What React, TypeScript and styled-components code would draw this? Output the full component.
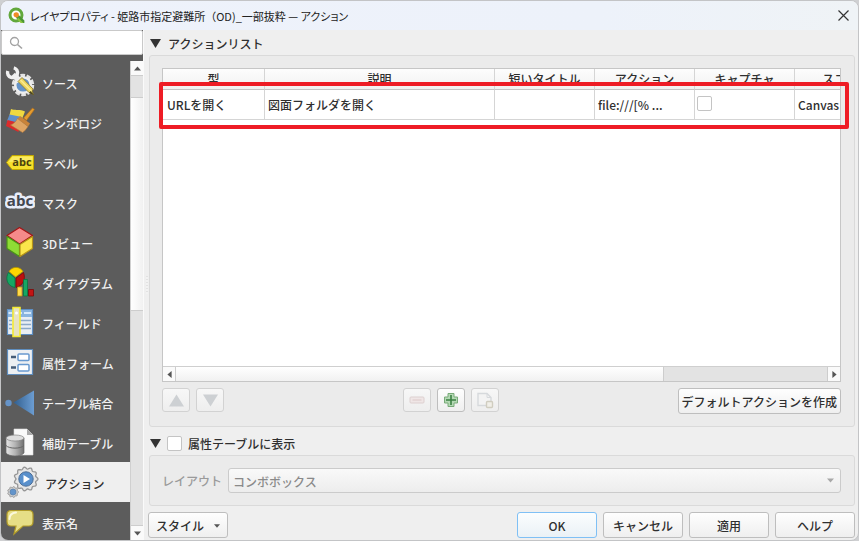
import React from "react";
import styled, { createGlobalStyle } from "styled-components";

const Global = createGlobalStyle`
  *, *::before, *::after { box-sizing: border-box; }
  body { margin: 0; background: #cfd0d2; }
  body, button, input, select, table {
    font-family: "Noto Sans CJK JP", "Noto Sans", sans-serif;
    font-size: 12px;
    font-weight: 500;
    color: #2f2f2f;
  }
  button { padding: 0; }
`;

const Window = styled.div`
  height: 100vh;
  display: flex;
  flex-direction: column;
  overflow: hidden;
  background: #efefef;
  border: 1px solid #c3c4c6;
  border-radius: 8px;
`;

const TitleBar = styled.header`
  flex: none;
  height: 29px;
  display: flex;
  align-items: center;
  gap: 5px;
  padding: 0 9px 0 7px;
  background: linear-gradient(90deg, #eef2fb, #edf2fa 70%, #eff3f6);
`;

const Title = styled.h1`
  flex: 1;
  margin: 0;
  font-size: 11px;
  font-weight: 400;
  font-feature-settings: "palt";
  white-space: nowrap;
  color: #222;
`;

const FullWidth = styled.span`
  font-feature-settings: normal;
`;

const CloseButton = styled.button`
  display: flex;
  border: 0;
  background: none;
`;

const Body = styled.div`
  flex: 1;
  min-height: 0;
  display: flex;
`;

const Sidebar = styled.aside`
  flex: none;
  width: 142px;
  display: flex;
  flex-direction: column;
  background: #5c5c5c;
`;

const SearchBox = styled.label`
  flex: none;
  display: flex;
  align-items: center;
  gap: 4px;
  height: 25px;
  padding: 0 7px;
  background: #fff;
  border: 1px solid #c9c9c9;
  border-radius: 2px;
`;

const SearchInput = styled.input`
  flex: 1;
  min-width: 0;
  border: 0;
  outline: 0;
  background: transparent;
`;

const ListArea = styled.div`
  flex: 1;
  min-height: 0;
  display: flex;
  padding-top: 6px;
`;

const PageList = styled.nav`
  flex: 1;
  padding-top: 1px;
  overflow: hidden;
`;

const PageItem = styled.button<{ $active?: boolean }>`
  display: flex;
  align-items: center;
  gap: ${(p) => (p.$active ? 6 : 7)}px;
  width: 100%;
  height: 40px;
  padding: 2px 0 0 ${(p) => (p.$active ? 6 : 4)}px;
  border: 0;
  background: ${(p) => (p.$active ? "#efefef" : "transparent")};
  color: ${(p) => (p.$active ? "#2f2f2f" : "#f0f0f0")};
  text-align: left;
  white-space: nowrap;
  svg { flex: none; margin-top: -3px; }
`;

const VScroll = styled.div`
  flex: none;
  width: 13px;
  display: flex;
  flex-direction: column;
  background: #e3e3e3;
  border-left: 1px solid #d0d0d0;
`;

const HScroll = styled.div`
  flex: none;
  height: 15px;
  display: flex;
  background: #e3e3e3;
  border-top: 1px solid #cfcfcf;
`;

const ScrollArrow = styled.button`
  flex: none;
  display: flex;
  align-items: center;
  justify-content: center;
  min-width: 12px;
  min-height: 14px;
  border: 0;
  background: #fafafa;
`;

const VTrack = styled.div`
  flex: 1;
  display: grid;
  grid-template-rows: 21fr 215fr 215fr;
  border: 0 solid #cdcdcd;
  border-width: 1px 0;
`;

const HTrack = styled.div`
  flex: 1;
  display: grid;
  grid-template-columns: 3fr 1fr;
  border: 0 solid #cdcdcd;
  border-width: 0 1px;
`;

const Thumb = styled.div<{ $vertical?: boolean }>`
  ${(p) => (p.$vertical ? "grid-row: 2;" : "")}
  background: linear-gradient(${(p) => (p.$vertical ? "90deg" : "180deg")}, #fff, #f1f1f1);
  border: 0 solid #cdcdcd;
  border-width: ${(p) => (p.$vertical ? "1px 0" : "0 1px 0 0")};
`;

const Splitter = styled.div`
  flex: none;
  width: 6px;
  display: flex;
  align-items: center;
  justify-content: center;
  border-left: 1px solid #fafafa;
  &::after {
    content: "";
    width: 2px;
    height: 18px;
    background: repeating-linear-gradient(#e2e2e2 0 1px, #f2f2f2 1px 3px);
  }
`;

const Main = styled.main`
  flex: 1;
  min-width: 0;
  display: flex;
  flex-direction: column;
  padding-right: 3px;
`;

const GroupTitle = styled.h2<{ $tall?: boolean }>`
  flex: none;
  display: flex;
  align-items: center;
  gap: ${(p) => (p.$tall ? 6 : 7)}px;
  height: ${(p) => (p.$tall ? 28 : 25)}px;
  padding: ${(p) => (p.$tall ? 4 : 2)}px 0 0 1px;
  margin: 0;
  font-size: 12px;
  font-weight: 500;
  label { display: flex; align-items: center; gap: 6px; }
`;

const Disclosure = styled.button`
  display: flex;
  border: 0;
  background: none;
`;

const Group = styled.section<{ $grow?: boolean }>`
  flex: ${(p) => (p.$grow ? "1" : "none")};
  min-height: 0;
  display: flex;
  flex-direction: column;
  padding: 12px 13px 12px 12px;
  background: #ebebeb;
  border: 1px solid #dadada;
  border-radius: 3px;
`;

const TableFrame = styled.div`
  position: relative;
  flex: 1;
  min-height: 0;
  display: flex;
  flex-direction: column;
  background: #fff;
  border: 1px solid #c6c6c6;
`;

const TableViewport = styled.div`
  flex: 1;
  min-height: 0;
  overflow: hidden;
`;

const ActionTable = styled.table`
  table-layout: fixed;
  width: 735px;
  border-collapse: separate;
  border-spacing: 0;
  th, td { padding: 0; border: 0 solid #d5d5d5; white-space: nowrap; overflow: hidden; line-height: 18px; }
  th {
    height: 21px;
    border-width: 0 1px 1px 0;
    border-bottom-color: #c4c4c4;
    background: linear-gradient(#fdfdfd, #f1f1f1);
    font-weight: 500;
    text-align: center;
  }
  td { height: 30px; padding: 1px 3px 0; border-width: 0 1px 1px 0; }
  td:first-child { padding-left: 4px; }
  td input { display: block; margin: -4px 0 0 -1px; }
`;

const Column = styled.col<{ $width: number }>`
  width: ${(p) => p.$width}px;
`;

const Highlight = styled.div`
  position: absolute;
  top: 13px;
  left: -4px;
  right: -9px;
  height: 47px;
  border: 4px solid #ee1c25;
  border-radius: 2px;
  pointer-events: none;
`;

const Check = styled.input`
  appearance: none;
  flex: none;
  width: 15px;
  height: 15px;
  margin: 0;
  background: #fff;
  border: 1px solid #c4c4c4;
  border-radius: 2px;
`;

const ToolRow = styled.div`
  flex: none;
  display: flex;
  justify-content: space-between;
  padding-top: 6px;
`;

const ToolGroup = styled.div`
  display: flex;
  gap: 6px;
`;

const Button = styled.button<{ $primary?: boolean; $width?: number }>`
  flex: none;
  display: flex;
  align-items: center;
  justify-content: center;
  gap: 10px;
  height: 26px;
  width: ${(p) => (p.$width ? `${p.$width}px` : "auto")};
  padding: 1px 3px 0;
  background: ${(p) => (p.$primary ? "linear-gradient(#fbfdfe, #eaf1f6)" : "linear-gradient(#fefefe, #efefef)")};
  border: 1px solid ${(p) => (p.$primary ? "#7fc0f5" : "#bebebe")};
  border-radius: 3px;
  white-space: nowrap;
  &:disabled { border-color: #d2d2d2; background: linear-gradient(#f7f7f7, #eee); }
`;

const ToolButton = styled(Button)`
  width: 28px;
  height: 24px;
  padding: 0;
`;

const LayoutRow = styled.div`
  display: flex;
  align-items: center;
  gap: 6px;
  label { color: #9a9a9a; }
`;

const ComboBox = styled.div`
  flex: 1;
  position: relative;
  svg { position: absolute; right: 7px; top: 9px; pointer-events: none; }
`;

const Combo = styled.select`
  appearance: none;
  display: block;
  width: 100%;
  height: 25px;
  padding: 1px 20px 0 4px;
  color: #8a8a8a;
  opacity: 1;
  background: linear-gradient(#f9f9f9, #ededed);
  border: 1px solid #cbcbcb;
  border-radius: 3px;
`;

const Footer = styled.footer`
  flex: none;
  display: flex;
  justify-content: space-between;
  padding: 6px 0 2px;
  margin-left: -1px;
`;

const DialogButtons = styled.div`
  display: flex;
  gap: 6px;
`;

const triangles = {
  up: "M0 9 5 1 10 9z",
  down: "M0 1 10 1 5 9z",
  left: "M8 0 2 5 8 10z",
  right: "M2 0 8 5 2 10z",
  smallUp: "M0 8 5 2 10 8z",
  smallDown: "M0 2 10 2 5 8z",
};

function Triangle({ dir, size = 7, color = "#555" }: { dir: keyof typeof triangles; size?: number; color?: string }) {
  return (
    <svg width={size} height={size} viewBox="0 0 10 10" aria-hidden="true">
      <path d={triangles[dir]} fill={color} />
    </svg>
  );
}

function Icon({ children }: { children: React.ReactNode }) {
  return (
    <svg width="30" height="32" viewBox="0 0 30 32" aria-hidden="true">
      {children}
    </svg>
  );
}

const QgisLogo = () => (
  <svg width="17" height="17" viewBox="0 0 17 17" aria-hidden="true">
    <circle cx="8" cy="8" r="6" fill="#fff" stroke="#62a83c" strokeWidth="3" />
    <path d="M8.2 8.2H11l5.400 5.400V16h-3L8.2 11z" fill="#4c9635" />
    <path d="M10 10.600 15.400 16h-2.600l-3.600-3.600z" fill="#8dc63f" />
    <path d="M5.500 8a2.700 2.700 0 1 1 5.400 0c0 1.500-1 2.500-2.400 2.500S5.500 9.500 5.500 8z" fill="#f08c28" />
  </svg>
);

const SourceIcon = () => (
  <Icon>
    <circle cx="18" cy="19" r="9.500" fill="none" stroke="#e4e4e4" strokeWidth="3.500" strokeDasharray="4.500 1.500" />
    <circle cx="18" cy="19" r="7.800" fill="#6594c9" stroke="#eee" strokeWidth="2.500" />
    <path d="m8 8.500 6.500 7" stroke="#eee" strokeWidth="5" />
    <path d="M2.800 5a5 5 0 1 0 6-3.200" fill="none" stroke="#f0f0f0" strokeWidth="3.400" />
    <path d="m13 15.500 4-4 11 11.500-1 2 1.500 3.500-4.500-2z" fill="#ecd55f" stroke="#8b7728" strokeWidth=".8" />
    <path d="m15.500 14 11 11" stroke="#fbeb90" strokeWidth="1.500" />
    <path d="m25.500 25 3.500 4-5-2z" fill="#44401f" />
  </Icon>
);

const BrushIcon = () => (
  <Icon>
    <path d="M6 3c5 2 9-.5 14 2.500L17 13 4.500 9z" fill="#efd840" />
    <path d="M4.500 8.500 17 11l-2 7-13-3z" fill="#5f8fca" />
    <path d="m2.500 14 12 3-1 9-12.500-6z" fill="#dd2b2b" />
    <path d="m27.500 2 2 1.500-8 11-3-2.500z" fill="#e49b2f" stroke="#a86a1c" strokeWidth=".7" />
    <path d="m15 10 10 7.500-2 3L12.500 13z" fill="#c98339" />
    <path d="M12.500 12.500 23 20.500c-1.500 2-3.500 5-5.500 6L5.500 19c3-1 5.500-3.500 7-6.500z" fill="#dfa564" stroke="#b3783b" strokeWidth=".6" />
  </Icon>
);

const LabelIcon = () => (
  <Icon>
    <path d="M1.500 16.500 7 9.500h21.500v14H7z" fill="#f5df2c" stroke="#c2a800" strokeWidth="1" />
    <path d="m3.500 16 4-5.500h20v4z" fill="#fbf07a" opacity=".7" />
    <text x="17" y="20" textAnchor="middle" fontFamily="Open Sans, sans-serif" fontSize="11" fontWeight="700" fill="#4b4310">abc</text>
  </Icon>
);

const MaskIcon = () => (
  <Icon>
    <text x="15" y="20" textAnchor="middle" fontFamily="Open Sans, sans-serif" fontSize="15" fontWeight="700" fill="#43474f" stroke="#e9edf9" strokeWidth="5" strokeLinejoin="round" paintOrder="stroke">abc</text>
  </Icon>
);

const CubeIcon = () => (
  <Icon>
    <g strokeWidth="1.200" strokeLinejoin="round">
      <path d="M14.500 1.500 27.500 9.500 14.500 18 2 9.500z" fill="#f48a8a" stroke="#a31515" />
      <path d="M2 10.500 14.500 18.500v12L2 22.500z" fill="#8fdc35" stroke="#4a9418" />
      <path d="M27.500 10.500 15 18.500v12l12.500-8z" fill="#fbe64b" stroke="#b69418" />
    </g>
  </Icon>
);

const DiagramIcon = () => (
  <Icon>
    <g strokeWidth=".8">
      <path d="M10.500 11 4 5.500c3-5.500 11-5.500 14 0z" fill="#ffd500" stroke="#b49600" />
      <path d="M10 12v9.500C1 20 .5 11 3.500 6.500z" fill="#16a763" stroke="#087640" />
      <path d="m11 12 7.500-5.500c2.500 7-.5 13-7.500 15z" fill="#bd1010" stroke="#780909" />
      <path d="M12.500 21h4.500v9h-4.500z" fill="#ffd94a" stroke="#b79319" />
      <path d="M18.500 13.500h4v16.500h-4z" fill="#16a763" stroke="#087640" />
      <path d="M23.500 23.500h5v6.500h-5z" fill="#c31414" stroke="#780909" />
    </g>
  </Icon>
);

const FieldsIcon = () => (
  <Icon>
    <path d="M2.500 3.500h25v25h-25z" fill="#e9eef4" stroke="#5d8fc4" strokeWidth="1.200" />
    <path d="M3 4h24v7H3z" fill="#8ab5e0" />
    <path d="M13.500 7H17M19 7h7M3.500 7H7" stroke="#d6e9fb" strokeWidth="2" />
    <path d="M4 14.500h3M4 18.500h3M4 22.500h3M15 14.500h11M15 18.500h11M15 22.500h11" stroke="#8ca9c8" strokeWidth="1.500" />
    <path d="M8 1.500h7v29H8z" fill="#e7e3c1" stroke="#f4ea34" strokeWidth="1.600" />
    <circle cx="11.500" cy="7" r="1.500" fill="#fff" />
  </Icon>
);

const FormIcon = () => (
  <Icon>
    <path d="M2.500 3.500h25v25h-25z" fill="#eceff2" stroke="#5f8ebf" strokeWidth="1.200" />
    <path d="M6 11h5M6 21.500h5" stroke="#445c78" strokeWidth="2.400" />
    <rect x="13" y="8" width="11" height="6.500" rx="1" fill="#fff" stroke="#6899cf" strokeWidth="1.500" />
    <rect x="13" y="18.500" width="11" height="6.500" rx="1" fill="#fff" stroke="#6899cf" strokeWidth="1.500" />
  </Icon>
);

const JoinIcon = () => (
  <Icon>
    <defs>
      <linearGradient id="join" x1="0" x2="1">
        <stop offset="0" stopColor="#315f8f" />
        <stop offset="1" stopColor="#6c9dd2" />
      </linearGradient>
    </defs>
    <circle cx="3.500" cy="17" r="3.200" fill="#6694c9" />
    <path d="M8.500 16.500 29 4.500v25z" fill="url(#join)" />
  </Icon>
);

const StorageIcon = () => (
  <Icon>
    <defs>
      <linearGradient id="drum" x1="0" x2="1">
        <stop offset="0" stopColor="#e6e6e6" />
        <stop offset=".5" stopColor="#b5b5b5" />
        <stop offset="1" stopColor="#707070" />
      </linearGradient>
    </defs>
    <path d="M9 3h13l6 6v20H9z" fill="#fafafa" stroke="#ddd" strokeWidth=".6" />
    <path d="M22 3v6h6z" fill="#aaa" />
    <path d="M1 12v15c3 4 15 4 18 0V12z" fill="url(#drum)" stroke="#666" strokeWidth=".7" />
    <ellipse cx="10" cy="12" rx="9" ry="3" fill="#dedede" stroke="#858585" strokeWidth=".7" />
    <path d="M1 19.500c3 3.500 15 3.500 18 0" fill="none" stroke="#666" />
  </Icon>
);

const gearPath = (cx: number, cy: number, r: number, n: number, depth: number) => {
  const points: string[] = [];
  for (let i = 0; i < n * 8; i++) {
    const a = (i / (n * 8)) * Math.PI * 2;
    const rad = r - depth / 2 + (Math.cos(a * n) * depth) / 2;
    points.push(`${(cx + Math.cos(a) * rad).toFixed(2)},${(cy + Math.sin(a) * rad).toFixed(2)}`);
  }
  return `M${points.join("L")}Z`;
};

const ActionIcon = () => (
  <svg width="32" height="32" viewBox="0 0 32 32" aria-hidden="true">
    <g strokeLinejoin="round">
      <path d={gearPath(19, 13, 12, 11, 2)} fill="#e6e6e6" stroke="#969696" strokeWidth="1.300" />
      <circle cx="19" cy="13" r="7.200" fill="#5990cc" stroke="#4d6f98" strokeWidth="1" />
      <path d="m16.500 9 6.500 4-6.500 4z" fill="#fff" />
      <path d={gearPath(6, 26, 5.5, 9, 1)} fill="#ccc" stroke="#999" strokeWidth="1" />
      <circle cx="6" cy="26" r="3" fill="#6294cb" stroke="#5980ab" strokeWidth=".7" />
    </g>
  </svg>
);

const BubbleIcon = () => (
  <Icon>
    <path d="M6 4.500h18c2.500 0 4 1.500 4 4v7c0 3-1.500 4.500-4 4.500h-6l-9 8 2-8H6c-2.500 0-4-1.500-4-4.500v-7c0-2.500 1.500-4 4-4z" fill="#e6de86" stroke="#b29c29" strokeWidth="1.200" />
    <path d="M4.500 13c0-4 1.500-6 6.500-6.500" fill="none" stroke="#fbf9dc" strokeWidth="2" strokeLinecap="round" />
  </Icon>
);

const pages = [
  { name: "ソース", icon: <SourceIcon /> },
  { name: "シンボロジ", icon: <BrushIcon /> },
  { name: "ラベル", icon: <LabelIcon /> },
  { name: "マスク", icon: <MaskIcon /> },
  { name: "3Dビュー", icon: <CubeIcon /> },
  { name: "ダイアグラム", icon: <DiagramIcon /> },
  { name: "フィールド", icon: <FieldsIcon /> },
  { name: "属性フォーム", icon: <FormIcon /> },
  { name: "テーブル結合", icon: <JoinIcon /> },
  { name: "補助テーブル", icon: <StorageIcon /> },
  { name: "アクション", icon: <ActionIcon />, active: true },
  { name: "表示名", icon: <BubbleIcon /> },
];

const columns = [
  { name: "型", width: 102 },
  { name: "説明", width: 230 },
  { name: "短いタイトル", width: 100 },
  { name: "アクション", width: 100 },
  { name: "キャプチャ", width: 100 },
  { name: "スコープ", width: 103 },
];

export default function App() {
  return (
    <>
      <Global />
      <Window>
        <TitleBar>
          <QgisLogo />
          <Title>
            レイヤプロパティ - 姫路市指定避難所<FullWidth>（</FullWidth>OD)_一部抜粋 — アクション
          </Title>
          <CloseButton aria-label="閉じる">
            <svg width="11" height="11" viewBox="0 0 11 11" aria-hidden="true">
              <path d="m.5.5 10 10m0-10-10 10" stroke="#333" strokeWidth="1.200" />
            </svg>
          </CloseButton>
        </TitleBar>
        <Body>
          <Sidebar>
            <SearchBox>
              <svg width="14" height="14" viewBox="0 0 14 14" fill="none" stroke="#a3a3a3" aria-hidden="true">
                <circle cx="5.500" cy="5.500" r="4" strokeWidth="1.300" />
                <path d="m8.500 8.500 4.500 4" strokeWidth="1.600" />
              </svg>
              <SearchInput type="text" aria-label="検索" />
            </SearchBox>
            <ListArea>
              <PageList>
                {pages.map((p) => (
                  <PageItem key={p.name} $active={p.active}>
                    {p.icon}
                    {p.name}
                  </PageItem>
                ))}
              </PageList>
              <VScroll>
                <ScrollArrow aria-label="上へ"><Triangle dir="smallUp" /></ScrollArrow>
                <VTrack><Thumb $vertical /></VTrack>
                <ScrollArrow aria-label="下へ"><Triangle dir="smallDown" /></ScrollArrow>
              </VScroll>
            </ListArea>
          </Sidebar>
          <Splitter />
          <Main>
            <GroupTitle>
              <Disclosure aria-label="折りたたむ"><Triangle dir="down" size={11} color="#333" /></Disclosure>
              アクションリスト
            </GroupTitle>
            <Group $grow>
              <TableFrame>
                <TableViewport>
                  <ActionTable>
                    <colgroup>
                      {columns.map((c) => <Column key={c.name} $width={c.width} />)}
                    </colgroup>
                    <thead>
                      <tr>{columns.map((c) => <th key={c.name} scope="col">{c.name}</th>)}</tr>
                    </thead>
                    <tbody>
                      <tr>
                        <td>URLを開く</td>
                        <td>図面フォルダを開く</td>
                        <td />
                        <td>file:///[% ...</td>
                        <td><Check type="checkbox" aria-label="キャプチャ" /></td>
                        <td>Canvas</td>
                      </tr>
                    </tbody>
                  </ActionTable>
                </TableViewport>
                <HScroll>
                  <ScrollArrow aria-label="左へ"><Triangle dir="left" /></ScrollArrow>
                  <HTrack><Thumb /></HTrack>
                  <ScrollArrow aria-label="右へ"><Triangle dir="right" /></ScrollArrow>
                </HScroll>
                <Highlight />
              </TableFrame>
              <ToolRow>
                <ToolGroup>
                  <ToolButton disabled aria-label="上に移動"><Triangle dir="up" size={15} color="#cdd0d3" /></ToolButton>
                  <ToolButton disabled aria-label="下に移動"><Triangle dir="down" size={15} color="#cdd0d3" /></ToolButton>
                </ToolGroup>
                <ToolGroup>
                  <ToolButton disabled aria-label="削除">
                    <svg width="16" height="16" viewBox="0 0 16 16" aria-hidden="true">
                      <rect x="1" y="5" width="14" height="6" rx="1" fill="#efe6e6" stroke="#ddd0d0" />
                      <path d="M3.500 8h9" stroke="#dcc8c8" />
                    </svg>
                  </ToolButton>
                  <ToolButton aria-label="追加">
                    <svg width="16" height="16" viewBox="0 0 16 16" aria-hidden="true">
                      <path d="M5 1.500h6V5h3.500v6H11v3.500H5V11H1.500V5H5z" fill="#b5d9b5" stroke="#79ab79" />
                      <path d="M8 3v10M3 8h10" stroke="#3b8043" strokeWidth="1.600" />
                    </svg>
                  </ToolButton>
                  <ToolButton disabled aria-label="複製">
                    <svg width="18" height="18" viewBox="0 0 18 18" aria-hidden="true">
                      <path d="M2 2.500h9l4 4v8H2z" fill="#f3f3f3" stroke="#d6d9dc" strokeWidth="1.400" />
                      <path d="M11 2.500v4h4" fill="none" stroke="#d6d9dc" />
                      <rect x="10.500" y="10.500" width="6" height="6" rx="1" fill="#f1efe8" stroke="#d0cdc0" strokeWidth="1.400" />
                    </svg>
                  </ToolButton>
                </ToolGroup>
                <ToolGroup>
                  <Button>デフォルトアクションを作成</Button>
                </ToolGroup>
              </ToolRow>
            </Group>
            <GroupTitle $tall>
              <Disclosure aria-label="折りたたむ"><Triangle dir="down" size={11} color="#333" /></Disclosure>
              <label>
                <Check type="checkbox" />
                属性テーブルに表示
              </label>
            </GroupTitle>
            <Group>
              <LayoutRow>
                <label htmlFor="layout">レイアウト</label>
                <ComboBox>
                  <Combo id="layout" disabled>
                    <option>コンボボックス</option>
                  </Combo>
                  <Triangle dir="smallDown" color="#a8a8a8" />
                </ComboBox>
              </LayoutRow>
            </Group>
            <Footer>
              <Button $width={80}>スタイル<Triangle dir="smallDown" size={6} /></Button>
              <DialogButtons>
                <Button $primary $width={80}>OK</Button>
                <Button $width={80}>キャンセル</Button>
                <Button $width={80}>適用</Button>
                <Button $width={80}>ヘルプ</Button>
              </DialogButtons>
            </Footer>
          </Main>
        </Body>
      </Window>
    </>
  );
}
